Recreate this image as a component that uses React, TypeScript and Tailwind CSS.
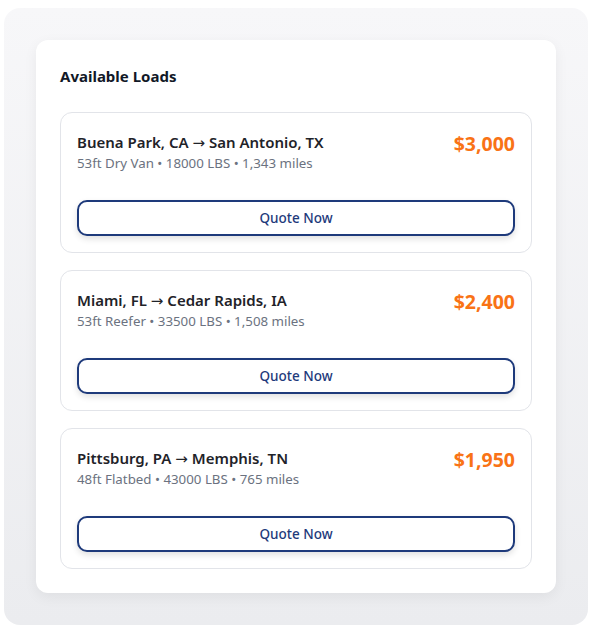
import React from 'react'

// ================================
// DATA
// ================================

interface Load {
  from: string
  to: string
  details: string
  price: string
}

const loads: Load[] = [
  {
    from: 'Buena Park, CA',
    to: 'San Antonio, TX',
    details: '53ft Dry Van • 18000 LBS • 1,343 miles',
    price: '$3,000',
  },
  {
    from: 'Miami, FL',
    to: 'Cedar Rapids, IA',
    details: '53ft Reefer • 33500 LBS • 1,508 miles',
    price: '$2,400',
  },
  {
    from: 'Pittsburg, PA',
    to: 'Memphis, TN',
    details: '48ft Flatbed • 43000 LBS • 765 miles',
    price: '$1,950',
  },
]

// ================================
// LOAD CARD
// ================================

const LoadCard: React.FC<{ load: Load }> = ({ load }) => {
  return (
    <div className="rounded-xl border border-[#e2e4e9] bg-white p-4">
      <div className="flex items-start justify-between">
        <div className="min-w-0 pt-[2px]">
          <h3 className="text-[15px] leading-[22px] font-semibold text-[#1f2329]">
            {load.from}{' '}
            <span className="font-['DejaVu_Sans',sans-serif] leading-none font-normal">→</span>{' '}
            {load.to}
          </h3>
          <p className="text-[13.3px] leading-[20px] text-[#6b7280]">{load.details}</p>
        </div>
        <div className="pt-[2px] text-[19.5px] leading-[26px] font-bold text-[#f97316]">{load.price}</div>
      </div>
      <button className="mt-[27px] h-[36px] w-full rounded-[10px] border-2 border-[#1e3a7b] bg-white text-[13.5px] font-medium text-[#1e3a7b] shadow-[0_3px_6px_rgba(0,0,0,0.12)]">
        Quote Now
      </button>
    </div>
  )
}

// ================================
// APP
// ================================

export default function App() {
  return (
    <div className="px-1 pt-2 pb-1 font-['Noto_Sans','Open_Sans',sans-serif]">
      <div className="rounded-2xl bg-gradient-to-b from-[#f7f7f9] to-[#ebecef] p-8">
        <div className="rounded-xl bg-white p-6 shadow-[0_4px_14px_rgba(0,0,0,0.06)]">
          <h2 className="mb-6 text-[15px] leading-[24px] font-bold text-[#111827]">Available Loads</h2>
          <div className="flex flex-col gap-[17px]">
            {loads.map((load) => (
              <LoadCard key={load.from} load={load} />
            ))}
          </div>
        </div>
      </div>
    </div>
  )
}
